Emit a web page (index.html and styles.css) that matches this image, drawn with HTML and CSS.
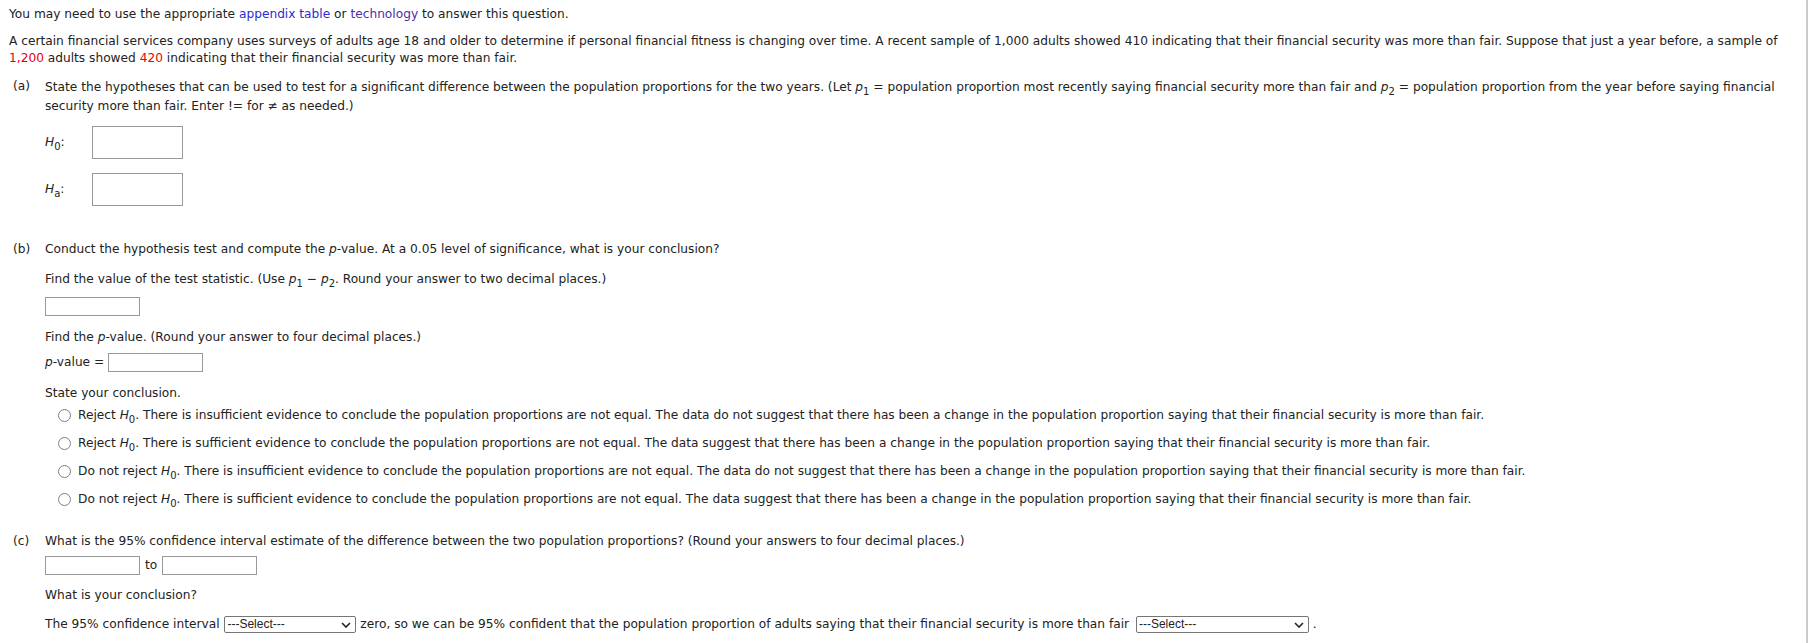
FILE: index.html
```html
<!DOCTYPE html>
<html>
<head>
<meta charset="utf-8">
<link rel="stylesheet" href="styles.css">
</head>
<body>
<div class="page">
  <p class="intro">You may need to use the appropriate <a class="link">appendix table</a> or <a class="link visited">technology</a> to answer this question.</p>
  <p class="stem">A certain financial services company uses surveys of adults age 18 and older to determine if personal financial fitness is changing over time. A recent sample of 1,000 adults showed 410 indicating that their financial security was more than fair. Suppose that just a year before, a sample of <span class="red">1,200</span> adults showed <span class="red">420</span> indicating that their financial security was more than fair.</p>

  <div class="part part-a">
    <span class="plabel">(a)</span>
    <div class="pbody">
      <p class="pq">State the hypotheses that can be used to test for a significant difference between the population proportions for the two years. (Let <i>p</i><sub>1</sub> = population proportion most recently saying financial security more than fair and <i>p</i><sub>2</sub> = population proportion from the year before saying financial security more than fair. Enter != for &ne; as needed.)</p>
      <div class="hyp-row hyp-first">
        <span class="hlabel"><i>H</i><sub>0</sub>:</span>
        <span class="tbox hbox"></span>
      </div>
      <div class="hyp-row hyp-second">
        <span class="hlabel"><i>H</i><sub>a</sub>:</span>
        <span class="tbox hbox"></span>
      </div>
    </div>
  </div>

  <div class="part part-b">
    <span class="plabel">(b)</span>
    <div class="pbody">
      <p class="pq">Conduct the hypothesis test and compute the <i>p</i>-value. At a 0.05 level of significance, what is your conclusion?</p>
      <p class="sub-q">Find the value of the test statistic. (Use <i>p</i><sub>1</sub> &minus; <i>p</i><sub>2</sub>. Round your answer to two decimal places.)</p>
      <span class="tbox sbox stat-box"></span>
      <p class="sub-q pq-p">Find the <i>p</i>-value. (Round your answer to four decimal places.)</p>
      <div class="pval-row"><span><i>p</i>-value =</span><span class="tbox sbox"></span></div>
      <p class="sub-q state">State your conclusion.</p>
      <ul class="choices">
        <li><span class="radio"></span><span>Reject <i>H</i><sub>0</sub>. There is insufficient evidence to conclude the population proportions are not equal. The data do not suggest that there has been a change in the population proportion saying that their financial security is more than fair.</span></li>
        <li><span class="radio"></span><span>Reject <i>H</i><sub>0</sub>. There is sufficient evidence to conclude the population proportions are not equal. The data suggest that there has been a change in the population proportion saying that their financial security is more than fair.</span></li>
        <li><span class="radio"></span><span>Do not reject <i>H</i><sub>0</sub>. There is insufficient evidence to conclude the population proportions are not equal. The data do not suggest that there has been a change in the population proportion saying that their financial security is more than fair.</span></li>
        <li><span class="radio"></span><span>Do not reject <i>H</i><sub>0</sub>. There is sufficient evidence to conclude the population proportions are not equal. The data suggest that there has been a change in the population proportion saying that their financial security is more than fair.</span></li>
      </ul>
    </div>
  </div>

  <div class="part part-c">
    <span class="plabel">(c)</span>
    <div class="pbody">
      <p class="pq">What is the 95% confidence interval estimate of the difference between the two population proportions? (Round your answers to four decimal places.)</p>
      <div class="ci-row"><span class="tbox cbox"></span><span class="to">to</span><span class="tbox cbox"></span></div>
      <p class="sub-q concl">What is your conclusion?</p>
      <p class="final">The 95% confidence interval <span class="select sel1"><span class="sel-text">---Select---</span><svg class="chev" width="10" height="6" viewBox="0 0 10 6"><path d="M1 1 L5 5 L9 1" fill="none" stroke="#222" stroke-width="1.6"/></svg></span> zero, so we can be 95% confident that the population proportion of adults saying that their financial security is more than fair <span class="select sel2"><span class="sel-text">---Select---</span><svg class="chev" width="10" height="6" viewBox="0 0 10 6"><path d="M1 1 L5 5 L9 1" fill="none" stroke="#222" stroke-width="1.6"/></svg></span> .</p>
    </div>
  </div>
</div>
</body>
</html>
```

FILE: styles.css
```css
html, body {
  margin: 0;
  padding: 0;
  background: #fff;
}
body {
  font-family: "DejaVu Sans", Verdana, sans-serif;
  font-size: 12.2px;
  line-height: 17px;
  color: #222;
}
.page {
  width: 1808px;
  min-height: 643px;
  padding: 6px 0 0 9px;
  box-sizing: border-box;
  border-right: 2px solid #ccc;
}
p { margin: 0; }
.link { color: #2b2bd0; }
.link.visited { color: #4c2fa6; }
.red { color: #e60000; }
i { font-style: italic; }
sub {
  font-size: 10px;
  vertical-align: -4px;
  line-height: 0;
}
.stem { margin-top: 10px; }
.part {
  display: flex;
  padding-left: 4px;
}
.plabel {
  width: 32px;
  flex: none;
}
.pbody { flex: 1; }
.part-a { margin-top: 11px; }
.part-a .pq { line-height: 19px; }
.tbox {
  display: inline-block;
  box-sizing: border-box;
  border: 1px solid #999;
  background: #fff;
}
.hyp-row {
  display: flex;
  align-items: center;
}
.hyp-first { margin-top: 10px; }
.hyp-second { margin-top: 14px; }
.hlabel {
  width: 47px;
  flex: none;
}
.hbox { width: 91px; height: 33px; }
.part-b { margin-top: 35px; }
.sub-q { margin-top: 13px; }
.sbox { width: 95px; height: 19px; }
.stat-box { display: block; margin-top: 9px; }
.pq-p { margin-top: 13px; }
.pval-row {
  display: flex;
  align-items: center;
  gap: 4px;
  margin-top: 7px;
}
.state { margin-top: 13px; }
.choices {
  list-style: none;
  margin: -1px 0 0;
  padding: 0 0 0 13px;
}
.choices li {
  display: flex;
  align-items: center;
  gap: 7px;
  height: 28px;
}
.radio {
  width: 11px;
  height: 11px;
  border: 1px solid #808080;
  border-radius: 50%;
  flex: none;
  background: #fff;
}
.part-c { margin-top: 20px; }
.ci-row {
  display: flex;
  align-items: center;
  gap: 5px;
  margin-top: 6px;
}
.cbox { width: 95px; height: 19px; }
.concl { margin-top: 12px; }
.final { margin-top: 12px; }
.select {
  display: inline-flex;
  align-items: center;
  justify-content: space-between;
  box-sizing: border-box;
  height: 17px;
  border: 1px solid #767676;
  border-radius: 2px;
  padding: 0 4px 0 2px;
  vertical-align: middle;
  font-family: "Liberation Sans", Arial, sans-serif;
  font-size: 12px;
  color: #222;
  background: #fff;
}
.sel1 { width: 132px; margin-left: 1px; }
.sel2 { width: 173px; margin-left: 3px; }
```
